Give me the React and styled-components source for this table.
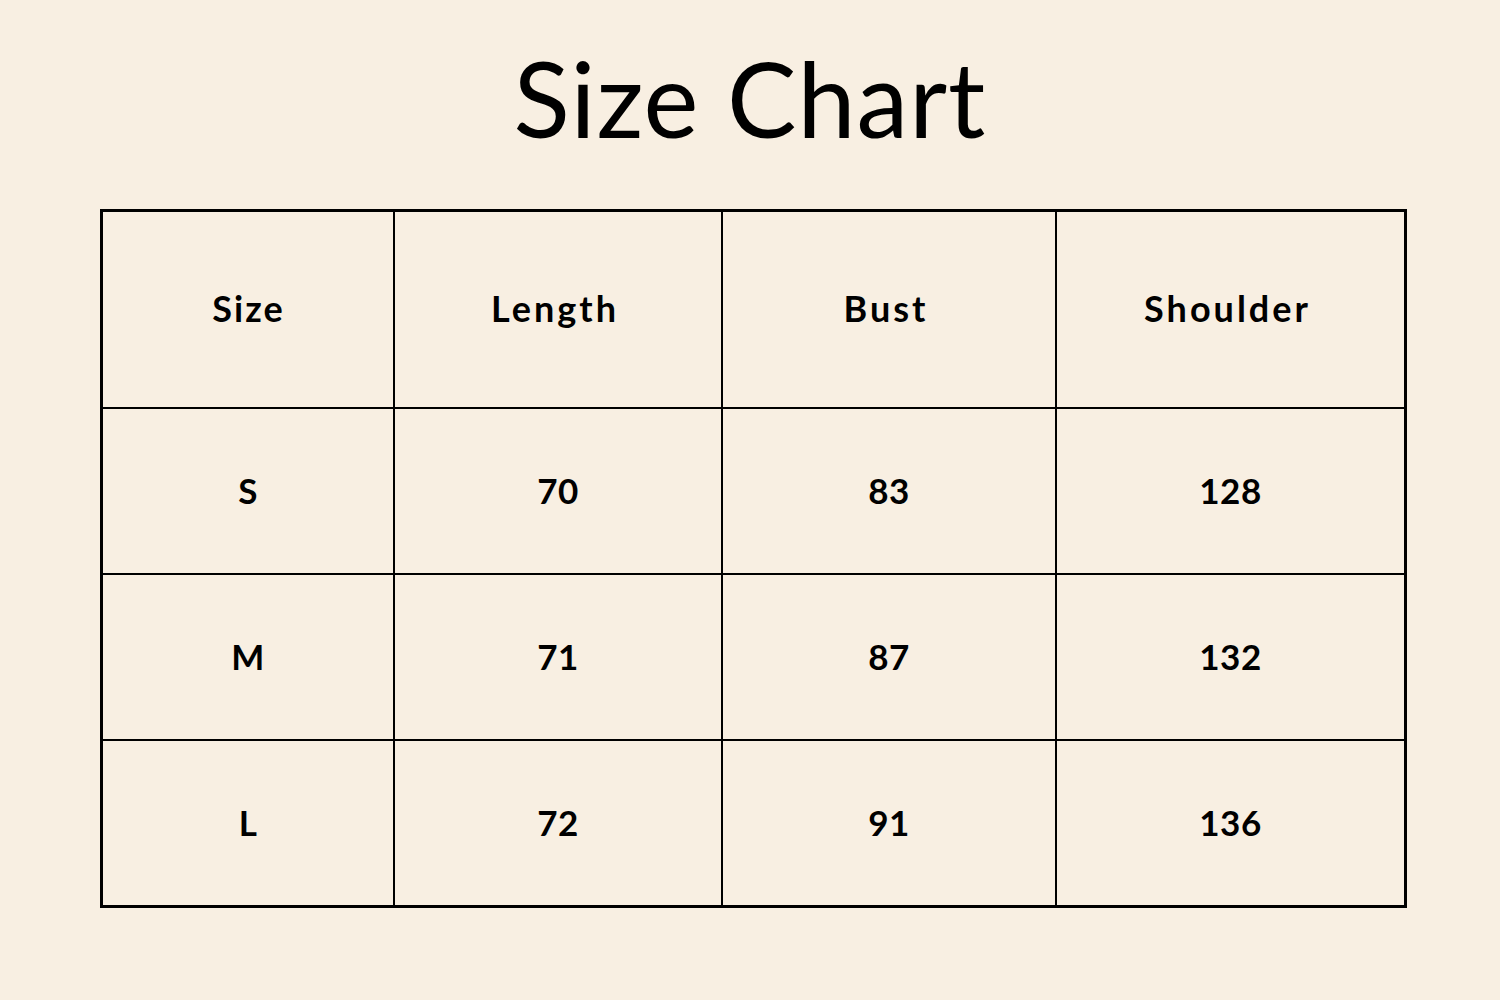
import styled, { createGlobalStyle } from "styled-components";

const GlobalStyle = createGlobalStyle`
  html, body {
    margin: 0;
    padding: 0;
    background: #f8efe2;
  }
  body {
    font-family: "Lato", "Open Sans", sans-serif;
    color: #000;
  }
`;

const headers = ["Size", "Length", "Bust", "Shoulder"];

const rows = [
  ["S", "70", "83", "128"],
  ["M", "71", "87", "132"],
  ["L", "72", "91", "136"],
];

const App = () => {
  return (
    <>
      <GlobalStyle />
      <Page>
        <Title>Size Chart</Title>
        <Table>
          {headers.map((h, i) => (
            <HeadCell key={h} $first={i === 0}>
              {h}
            </HeadCell>
          ))}
          {rows.map((row) =>
            row.map((value, i) => <Cell key={row[0] + i}>{value}</Cell>)
          )}
        </Table>
      </Page>
    </>
  );
};

const Page = styled.div`
  width: 1500px;
  height: 1000px;
  box-sizing: border-box;
  padding-top: 45px;
  display: flex;
  flex-direction: column;
  align-items: center;
`;

const Title = styled.h1`
  margin: 0 0 59px;
  font-size: 104px;
  font-weight: 400;
  line-height: 105px;
  letter-spacing: 1px;
`;

const Table = styled.div`
  margin-left: 7px;
  display: grid;
  grid-template-columns: 290px 326px 332px 347px;
  grid-template-rows: 195px 164px 164px 164px;
  gap: 2px;
  background: #000;
  border: 3px solid #000;
`;

const Cell = styled.div`
  background: #f8efe2;
  display: flex;
  align-items: center;
  justify-content: center;
  padding-bottom: 2px;
  font-size: 35px;
  font-weight: 700;
  letter-spacing: 0.5px;
`;

const HeadCell = styled(Cell)`
  padding-bottom: 4px;
  padding-right: ${(p) => (p.$first ? "0" : "6px")};
  padding-left: ${(p) => (p.$first ? "1px" : "0")};
  font-size: 36px;
  letter-spacing: ${(p) => (p.$first ? "2px" : "3px")};
`;

export default App;
